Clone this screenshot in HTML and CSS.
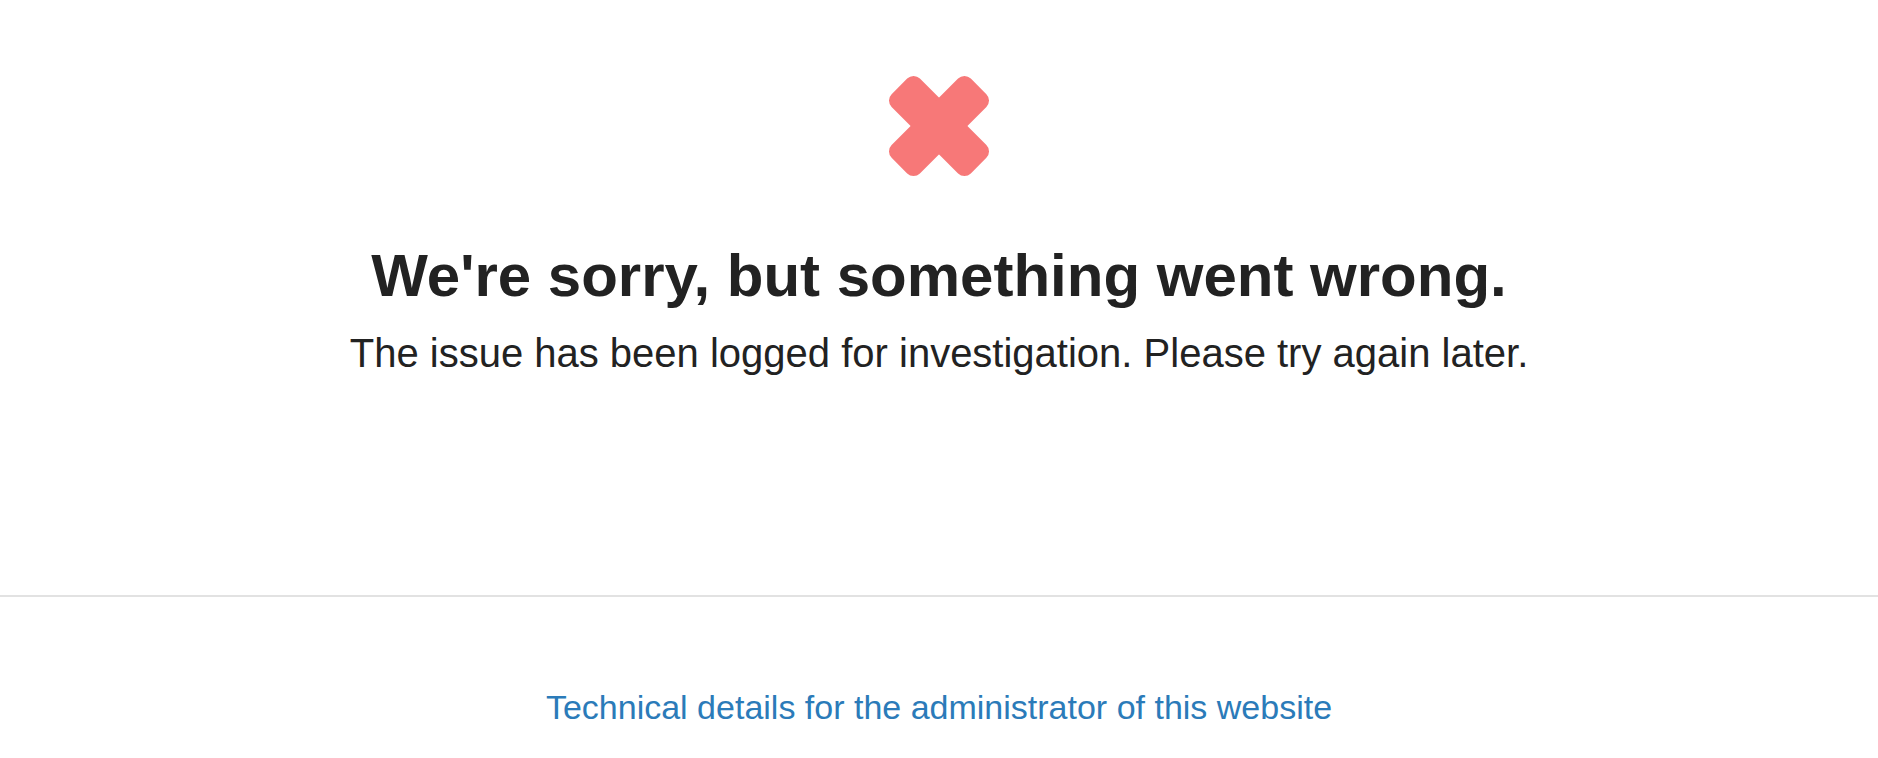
FILE: index.html
```html
<!DOCTYPE html>
<html lang="en">
  <head>
    <meta charset="UTF-8" />
    <title>Error</title>
    <link rel="stylesheet" href="styles.css">
  </head>
  <body>
    <div class="error">
      <svg class="icon" viewBox="0 0 100 100" width="100" height="100">
        <rect x="-6" y="30" width="112" height="40" rx="9" transform="rotate(45 50 50)" />
        <rect x="-6" y="30" width="112" height="40" rx="9" transform="rotate(-45 50 50)" />
      </svg>
      <h1>We're sorry, but something went wrong.</h1>
      <p>The issue has been logged for investigation. Please try again later.</p>
    </div>
    <div class="details">
      <a href="#">Technical details for the administrator of this website</a>
    </div>
  </body>
</html>
```

FILE: styles.css
```css
body {
  margin: 0;
  background-color: #fff;
  font-family: "Liberation Sans", Arial, sans-serif;
  color: #222;
}

.error {
  display: flex;
  flex-direction: column;
  align-items: center;
  padding-top: 76px;
  height: 597px;
  box-sizing: border-box;
  border-bottom: 2px solid #e2e2e2;
}

.icon {
  fill: #f77878;
  overflow: visible;
}

h1 {
  font-size: 60px;
  line-height: 64px;
  font-weight: bold;
  margin: 68px 0 0;
}

p {
  font-size: 40px;
  line-height: 56px;
  margin: 17px 0 0;
}

.details {
  text-align: center;
  padding-top: 86px;
}

.details a {
  font-size: 34px;
  line-height: 48px;
  color: #2b7bb9;
  text-decoration: none;
}
```
